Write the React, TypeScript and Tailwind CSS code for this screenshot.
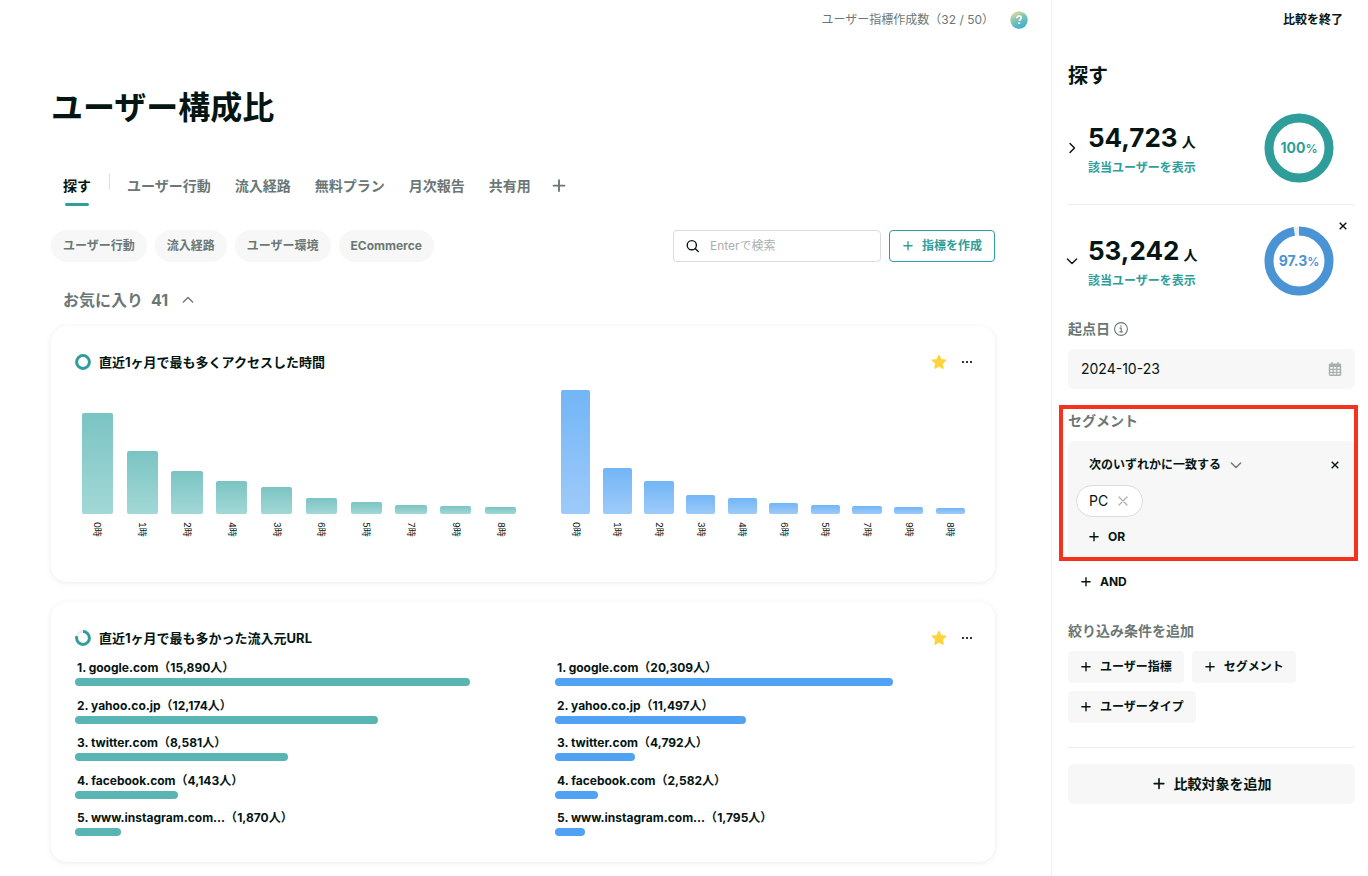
import type { ReactNode } from "react";

type IconProps = { className?: string };

const tabs = ["ユーザー行動", "流入経路", "無料プラン", "月次報告", "共有用"];
const categories = ["ユーザー行動", "流入経路", "ユーザー環境", "ECommerce"];

const hoursAll = [
  { label: "0時", value: 101 },
  { label: "1時", value: 63 },
  { label: "2時", value: 43 },
  { label: "4時", value: 33 },
  { label: "3時", value: 27 },
  { label: "6時", value: 16 },
  { label: "5時", value: 12 },
  { label: "7時", value: 9 },
  { label: "9時", value: 8 },
  { label: "8時", value: 7 },
];
const hoursPc = [
  { label: "0時", value: 124 },
  { label: "1時", value: 46 },
  { label: "2時", value: 33 },
  { label: "3時", value: 19 },
  { label: "4時", value: 16 },
  { label: "6時", value: 11 },
  { label: "5時", value: 9 },
  { label: "7時", value: 8 },
  { label: "9時", value: 7 },
  { label: "8時", value: 6 },
];
const HOURS_MAX = 124;

const urlsAll = [
  { name: "google.com", count: 15890 },
  { name: "yahoo.co.jp", count: 12174 },
  { name: "twitter.com", count: 8581 },
  { name: "facebook.com", count: 4143 },
  { name: "www.instagram.com...", count: 1870 },
];
const urlsPc = [
  { name: "google.com", count: 20309 },
  { name: "yahoo.co.jp", count: 11497 },
  { name: "twitter.com", count: 4792 },
  { name: "facebook.com", count: 2582 },
  { name: "www.instagram.com...", count: 1795 },
];

function Plus({ className = "size-3" }: IconProps) {
  return (
    <svg viewBox="0 0 12 12" className={className} fill="none" stroke="currentColor" strokeWidth="1.4" strokeLinecap="round" aria-hidden="true">
      <path d="M6 1.6v8.2M1.9 5.7h8.2" />
    </svg>
  );
}

function Close({ className = "size-2" }: IconProps) {
  return (
    <svg viewBox="0 0 8 8" className={className} fill="none" stroke="currentColor" strokeWidth="1.4" aria-hidden="true">
      <path d="M.7.7l6.6 6.6M7.3.7L.7 7.3" />
    </svg>
  );
}

function ThinClose() {
  return (
    <svg viewBox="0 0 10 10" className="size-2.5" fill="none" stroke="currentColor" strokeWidth="1.2" strokeLinecap="round" aria-hidden="true">
      <path d="M1 1l8 8M9 1L1 9" />
    </svg>
  );
}

function Chevron({ className = "size-3" }: IconProps) {
  return (
    <svg viewBox="0 0 12 12" className={className} fill="none" stroke="currentColor" strokeWidth="1.4" strokeLinecap="round" strokeLinejoin="round" aria-hidden="true">
      <path d="M1.4 4l4.6 4.5L10.6 4" />
    </svg>
  );
}

function Star() {
  return (
    <svg viewBox="0 0 16 16" className="size-4" aria-hidden="true">
      <path
        d="M8 1.6l1.9 4.1 4.7.6-3.5 3.2.9 4.7L8 12l-4 2.2.9-4.7L1.4 6.3l4.7-.6z"
        fill="#ffd33c"
        stroke="#ffd33c"
        strokeWidth="1.4"
        strokeLinejoin="round"
      />
    </svg>
  );
}

function Dots() {
  return (
    <svg viewBox="0 0 12 12" className="size-3" fill="#041512" aria-hidden="true">
      <rect x="1" y="5" width="2" height="2" rx=".7" />
      <rect x="5" y="5" width="2" height="2" rx=".7" />
      <rect x="9" y="5" width="2" height="2" rx=".7" />
    </svg>
  );
}

function SearchIcon() {
  return (
    <svg viewBox="0 0 14 14" className="size-3.5 shrink-0" fill="none" stroke="#041512" strokeWidth="1.4" strokeLinecap="round" aria-hidden="true">
      <circle cx="5.8" cy="6.2" r="4.6" />
      <path d="M9.2 9.6l3 3" />
    </svg>
  );
}

function HelpIcon() {
  return (
    <svg viewBox="0 0 18 18" className="size-[18px]" aria-hidden="true">
      <defs>
        <linearGradient id="help" x1="0.2" y1="0" x2="0.7" y2="1">
          <stop offset="0" stopColor="#f0d9a0" />
          <stop offset="0.45" stopColor="#7cc6b4" />
          <stop offset="1" stopColor="#3fa9cf" />
        </linearGradient>
      </defs>
      <circle cx="9" cy="9" r="8.7" fill="url(#help)" />
      <path d="M6.8 7.2c0-1.3 1-2.1 2.3-2.1s2.2.8 2.2 1.9c0 1.5-2.1 1.6-2.1 3.1" fill="none" stroke="#fff" strokeWidth="1.6" />
      <rect x="8.3" y="11.3" width="1.8" height="1.8" rx=".4" fill="#fff" />
    </svg>
  );
}

function InfoIcon() {
  return (
    <svg viewBox="0 0 14 14" className="size-3.5" fill="none" stroke="#6b7775" aria-hidden="true">
      <circle cx="7" cy="7" r="6.4" strokeWidth="1.1" />
      <path d="M5.6 6.1h1.6v3.8M5.4 9.9h3.4" strokeWidth="1.1" />
      <rect x="6.3" y="3.4" width="1.3" height="1.3" fill="#6b7775" stroke="none" />
    </svg>
  );
}

function CalendarIcon() {
  return (
    <svg viewBox="0 0 14 14" className="size-3.5 shrink-0" aria-hidden="true">
      <path fill="#a9afad" d="M3.4 0h1.4v1.6h4.4V0h1.4v1.6h1.2c.8 0 1.4.6 1.4 1.4v9.6c0 .8-.6 1.4-1.4 1.4H2.2c-.8 0-1.4-.6-1.4-1.4V3c0-.8.6-1.4 1.4-1.4h1.2z" />
      <path
        fill="#f7f7f7"
        d="M2.2 4.9h2.4v1.9H2.2zM5.8 4.9h2.4v1.9H5.8zM9.4 4.9h2.4v1.9H9.4zM2.2 7.9h2.4v1.9H2.2zM5.8 7.9h2.4v1.9H5.8zM9.4 7.9h2.4v1.9H9.4zM2.2 10.9h2.4v1.7H2.2zM5.8 10.9h2.4v1.7H5.8zM9.4 10.9h2.4v1.7H9.4z"
      />
    </svg>
  );
}

function Ring({ percent, color, width, className }: { percent: number; color: string; width: number; className: string }) {
  const r = 34.5 - width / 2;
  const length = 2 * Math.PI * r;
  return (
    <svg viewBox="0 0 70 70" className={className} fill="none" strokeWidth={width} aria-hidden="true">
      <circle cx="35" cy="35" r={r} stroke="#eeeeee" />
      <circle cx="35" cy="35" r={r} stroke={color} strokeDasharray={`${(length * percent) / 100} ${length}`} transform="rotate(-90 35 35)" />
    </svg>
  );
}

function Card({ title, percent, className, children }: { title: string; percent: number; className: string; children: ReactNode }) {
  return (
    <section className={`rounded-2xl bg-white px-6 pt-6 shadow-[0_1px_6px_rgba(0,0,0,0.08)] ${className}`}>
      <div className="flex h-6 items-center">
        <Ring percent={percent} color="#2f9e9b" width={13} className="size-4" />
        <h3 className="ml-2 text-[13px] leading-6 font-bold">{title}</h3>
        <button aria-label="お気に入り" className="mr-3.5 ml-auto">
          <Star />
        </button>
        <button aria-label="メニュー" className="-mr-0.5">
          <Dots />
        </button>
      </div>
      {children}
    </section>
  );
}

function HourChart({ data, barClass }: { data: { label: string; value: number }[]; barClass: string }) {
  return (
    <div className="flex">
      {data.map((d) => (
        <div key={d.label} className="flex flex-1 flex-col items-center">
          <div className="flex h-31 w-[70%] items-end">
            <div className={`w-full rounded-xs ${barClass}`} style={{ height: `${(d.value / HOURS_MAX) * 100}%` }} />
          </div>
          <span className="mt-2 text-[9px] leading-3 tabular-nums [text-orientation:sideways] [writing-mode:vertical-rl]">{d.label}</span>
        </div>
      ))}
    </div>
  );
}

function UrlList({ data, total, barClass }: { data: { name: string; count: number }[]; total: number; barClass: string }) {
  return (
    <ol className="flex h-[178px] flex-col justify-between">
      {data.map((d, i) => (
        <li key={d.name}>
          <p className="px-0.5 text-xs leading-5 font-bold whitespace-nowrap">
            {i + 1}. {d.name}（{d.count.toLocaleString("en-US")}人）
          </p>
          <div className={`h-2 rounded-full ${barClass}`} style={{ width: `${(d.count / total) * 100}%` }} />
        </li>
      ))}
    </ol>
  );
}

function Summary({ count, percent, color, open }: { count: string; percent: number; color: string; open: boolean }) {
  return (
    <div className="flex h-[70px] items-center">
      <button aria-label={open ? "閉じる" : "開く"} className="mr-2 -ml-0.5">
        <Chevron className={open ? "size-3" : "size-3 -rotate-90"} />
      </button>
      <div className="pt-1 pl-0.5">
        <p className="text-[26px] leading-8 font-bold whitespace-nowrap">
          {count}
          <span className="ml-1 text-sm">人</span>
        </p>
        <a href="#" className="mt-1 block text-xs leading-5 font-bold text-[#2f9e9b]">
          該当ユーザーを表示
        </a>
      </div>
      <div className="relative mr-[21px] ml-auto">
        <Ring percent={percent} color={color} width={9} className="size-[70px]" />
        <span className="absolute inset-0 flex items-center justify-center text-sm font-bold" style={{ color }}>
          <span>
            {percent}
            <span className="text-xs font-semibold">%</span>
          </span>
        </span>
      </div>
    </div>
  );
}

function AddButton({ children }: { children: ReactNode }) {
  return (
    <button className="flex h-8 items-center gap-2 rounded bg-[#f7f7f7] px-3 text-xs font-bold">
      <Plus />
      {children}
    </button>
  );
}

export default function App() {
  return (
    <div className="flex min-h-screen bg-white font-[Inter,'Noto_Sans_CJK_JP',sans-serif] text-[#041512]">
      <main className="min-w-0 flex-1">
        {/* Top bar */}
        <header className="flex h-10 items-center justify-end pr-[23px]">
          <span className="text-xs text-[#6b7775]">ユーザー指標作成数（32 / 50）</span>
          <button aria-label="ヘルプ" className="ml-4">
            <HelpIcon />
          </button>
        </header>

        <div className="pr-14 pb-3.5 pl-[51px]">
          <h1 className="mt-11 text-[32px] leading-12 font-bold">ユーザー構成比</h1>

          {/* Tabs */}
          <nav className="mt-[34px] flex h-10 text-sm font-bold text-[#6b7775]">
            <button className="relative px-3 text-[#041512]">
              探す
              <span className="absolute bottom-0 left-3.5 h-[3px] w-6 rounded-full bg-[#2f9e9b]" />
            </button>
            <span className="mt-2 mr-[5px] ml-1.5 h-4 w-px bg-[#e0e0e0]" />
            {tabs.map((tab) => (
              <button key={tab} className="px-3">
                {tab}
              </button>
            ))}
            <button aria-label="タブを追加" className="flex w-8 items-center justify-center">
              <Plus className="size-4" />
            </button>
          </nav>

          {/* Filters */}
          <div className="mt-6 flex items-center gap-2">
            {categories.map((category) => (
              <button key={category} className="h-8 rounded-full bg-[#f7f7f7] px-3 text-xs font-bold text-[#6b7775]">
                {category}
              </button>
            ))}
            <label className="ml-auto flex h-8 w-52 items-center rounded border border-[#dcdcdc] px-3">
              <SearchIcon />
              <input
                aria-label="検索"
                placeholder="Enterで検索"
                className="ml-2.5 w-full min-w-0 text-xs outline-none placeholder:text-[#a9afad]"
              />
            </label>
            <button className="flex h-8 items-center gap-2 rounded border border-[#2f9e9b] px-3 text-xs font-bold text-[#2f9e9b]">
              <Plus />
              指標を作成
            </button>
          </div>

          {/* Favorites */}
          <button className="mt-[26px] flex h-6 items-center px-3 font-bold text-[#6b7775]">
            <span>お気に入り</span>
            <span className="ml-2">41</span>
            <Chevron className="ml-3.5 size-3 rotate-180" />
          </button>

          <Card title="直近1ヶ月で最も多くアクセスした時間" percent={100} className="mt-3.5 min-h-64">
            <div className="mt-4 grid grid-cols-[15fr_13fr]">
              <div className="pr-8">
                <HourChart data={hoursAll} barClass="bg-linear-to-b from-[#7ac4c3] to-[#a2d8d6]" />
              </div>
              <HourChart data={hoursPc} barClass="bg-linear-to-b from-[#72b5f6] to-[#9dcbf9]" />
            </div>
          </Card>

          <Card title="直近1ヶ月で最も多かった流入元URL" percent={78} className="mt-5 pb-[26px]">
            <div className="mt-2 grid grid-cols-[15fr_13fr]">
              <div className="pr-8">
                <UrlList data={urlsAll} total={18018} barClass="bg-[#59b5b4]" />
              </div>
              <UrlList data={urlsPc} total={24995} barClass="bg-[#4fa2f4]" />
            </div>
          </Card>
        </div>
      </main>

      {/* Sidebar */}
      <aside className="w-[317px] shrink-0 border-l border-[#eeeeee] pr-[13px] pl-4">
        <div className="flex h-10 items-center justify-end pr-3">
          <button className="text-xs font-bold">比較を終了</button>
        </div>

        <h2 className="mt-[22px] text-xl leading-7 font-bold">探す</h2>

        <div className="mt-[23px] border-b border-[#eeeeee] pb-[21px]">
          <Summary count="54,723" percent={100} color="#2f9e9b" open={false} />
        </div>

        <div className="relative pt-[21px]">
          <Summary count="53,242" percent={97.3} color="#4a94d6" open />
          <button aria-label="比較対象を削除" className="absolute top-[13px] right-1 flex size-4 items-center justify-center">
            <Close />
          </button>
        </div>

        <div className="mt-[23px] flex h-5 items-center gap-1 text-sm font-bold text-[#6b7775]">
          <label htmlFor="base-date">起点日</label>
          <InfoIcon />
        </div>
        <div className="mt-2.5 flex h-10 items-center rounded-md bg-[#f7f7f7] px-[13px]">
          <input id="base-date" defaultValue="2024-10-23" className="w-full min-w-0 text-sm outline-none" />
          <CalendarIcon />
        </div>

        {/* Segment */}
        <section className="relative mt-[22px]">
          <h3 className="text-sm leading-5 font-bold text-[#6b7775]">セグメント</h3>
          <div className="mt-2.5 rounded-md bg-[#f7f7f7] px-2 pt-2 pb-1.5">
            <div className="flex h-8 items-center px-[13px]">
              <select aria-label="一致条件" className="appearance-none text-xs font-bold outline-none">
                <option>次のいずれかに一致する</option>
              </select>
              <Chevron className="pointer-events-none ml-2 size-3 text-[#6b7775]" />
              <button aria-label="条件を削除" className="-mr-[5px] ml-auto">
                <Close />
              </button>
            </div>
            <div className="mt-1 flex">
              <span className="flex h-8 items-center gap-2.5 rounded-full border border-[#dcdcdc] bg-white px-3 text-sm">
                PC
                <button aria-label="PCを削除" className="mr-0.5 text-[#a9afad]">
                  <ThinClose />
                </button>
              </span>
            </div>
            <button className="mt-1 flex h-8 items-center gap-2 px-3 text-xs font-bold">
              <Plus />
              OR
            </button>
          </div>
          <div className="pointer-events-none absolute -top-1.5 -right-[3px] -bottom-0.5 -left-[9px] border-4 border-[#f5321e]" />
        </section>

        <button className="mt-[7px] flex h-8 items-center gap-2 px-3 text-xs font-bold">
          <Plus />
          AND
        </button>

        {/* Conditions */}
        <h3 className="mt-[23px] text-sm leading-5 font-bold text-[#6b7775]">絞り込み条件を追加</h3>
        <div className="mt-2.5 flex flex-wrap gap-2">
          <AddButton>ユーザー指標</AddButton>
          <AddButton>セグメント</AddButton>
          <AddButton>ユーザータイプ</AddButton>
        </div>

        <hr className="mt-6 border-[#eeeeee]" />
        <button className="mt-4 flex h-10 w-full items-center justify-center gap-2 rounded-md bg-[#f7f7f7] text-sm font-bold">
          <Plus className="size-3.5" />
          比較対象を追加
        </button>
      </aside>
    </div>
  );
}
